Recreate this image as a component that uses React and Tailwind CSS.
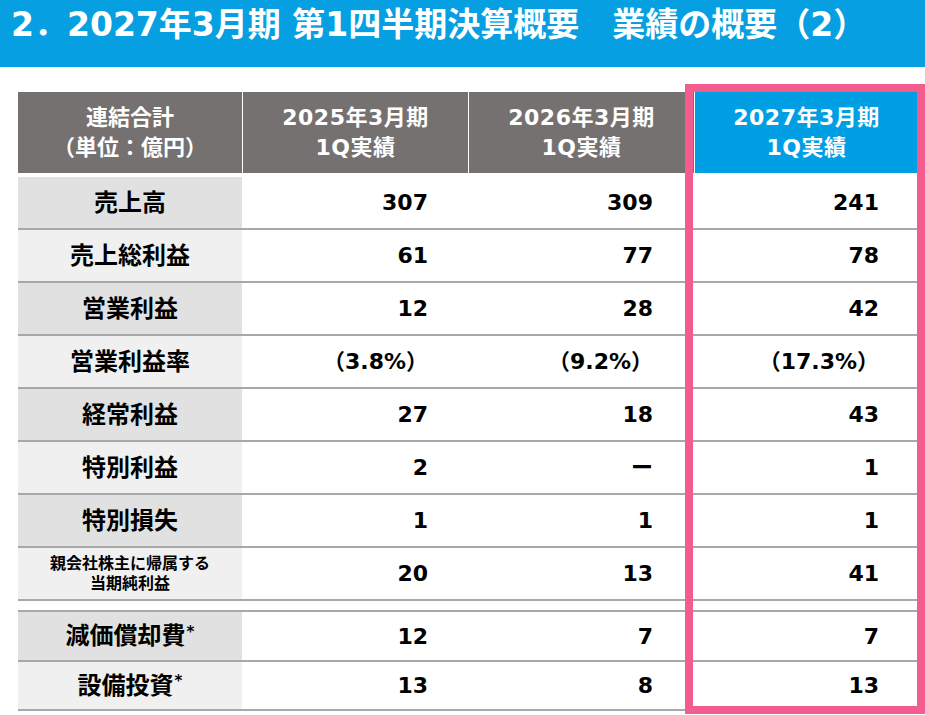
import React from 'react';

const font = { fontFamily: '"DejaVu Sans", "Noto Sans CJK JP", sans-serif' };

const rows = [
  { label: '売上高', v: ['307', '309', '241'], dark: true },
  { label: '売上総利益', v: ['61', '77', '78'] },
  { label: '営業利益', v: ['12', '28', '42'], dark: true },
  { label: '営業利益率', v: ['（3.8%）', '（9.2%）', '（17.3%）'] },
  { label: '経常利益', v: ['27', '18', '43'], dark: true },
  { label: '特別利益', v: ['2', 'ー', '1'] },
  { label: '特別損失', v: ['1', '1', '1'], dark: true },
  { label: '親会社株主に帰属する\n当期純利益', v: ['20', '13', '41'], small: true },
];

const extra = [
  { label: '減価償却費', v: ['12', '7', '7'], dark: true, h: 'h-[50px]' },
  { label: '設備投資', v: ['13', '8', '13'], h: 'h-[49px]' },
];

const cols = 'grid grid-cols-[224px_225px_225px_226px]';

const Row = ({ r, star, h = 'h-[53px]' }) => (
  <div className={`${cols} ${h} border-b-2 border-[#a8a8a8]`}>
    <div
      className={`flex flex-col items-center justify-center font-bold text-black ${
        r.dark ? 'bg-[#e1e1e1]' : 'bg-[#f0f0f0]'
      } ${r.small ? 'text-[16px] leading-[20px]' : 'text-[24px]'}`}
    >
      {r.label.split('\n').map((l) => (
        <span key={l}>
          {l}
          {star && <sup className="text-[15px] ml-[1px]">*</sup>}
        </span>
      ))}
    </div>
    {r.v.map((x, i) => (
      <div key={i} className="flex items-center justify-end pr-[39px] text-[22px] font-bold text-black">
        {x}
      </div>
    ))}
  </div>
);

export default function App() {
  return (
    <div className="w-[925px] h-[715px] bg-white overflow-hidden" style={font}>
      {/* title bar */}
      <div className="h-[67px] bg-[#069fe1] pl-[11px]">
        <h1 className="h-[50px] flex items-center text-[33px] font-bold text-white whitespace-nowrap">
          2．2027年3月期 第1四半期決算概要　業績の概要（2）
        </h1>
      </div>

      <div className="relative ml-[18px] mt-[25px] w-[900px]">
        {/* header */}
        <div className="grid grid-cols-[224px_225px_225px_223px] gap-x-[1px] h-[81px] text-white font-bold text-[22px] leading-[30px]">
          <div className="bg-[#767171] flex flex-col items-center justify-center">
            <span>連結合計</span>
            <span>（単位：億円）</span>
          </div>
          <div className="bg-[#767171] flex flex-col items-center justify-center tracking-[0.5px]">
            <span>2025年3月期</span>
            <span>1Q実績</span>
          </div>
          <div className="bg-[#767171] flex flex-col items-center justify-center tracking-[0.5px]">
            <span>2026年3月期</span>
            <span>1Q実績</span>
          </div>
          <div className="bg-[#009fe3] flex flex-col items-center justify-center tracking-[0.5px]">
            <span>2027年3月期</span>
            <span>1Q実績</span>
          </div>
        </div>

        <div className="mt-[4px]">
          {rows.map((r) => (
            <Row key={r.label} r={r} />
          ))}
        </div>

        <div className="mt-[9px] border-t-2 border-[#a8a8a8]">
          {extra.map((r) => (
            <Row key={r.label} r={r} star h={r.h} />
          ))}
        </div>

        {/* highlight frame */}
        <div className="absolute left-[667px] top-[-8px] w-[240px] h-[630px] border-[8px] border-[#f25c8e]" />
      </div>
    </div>
  );
}
